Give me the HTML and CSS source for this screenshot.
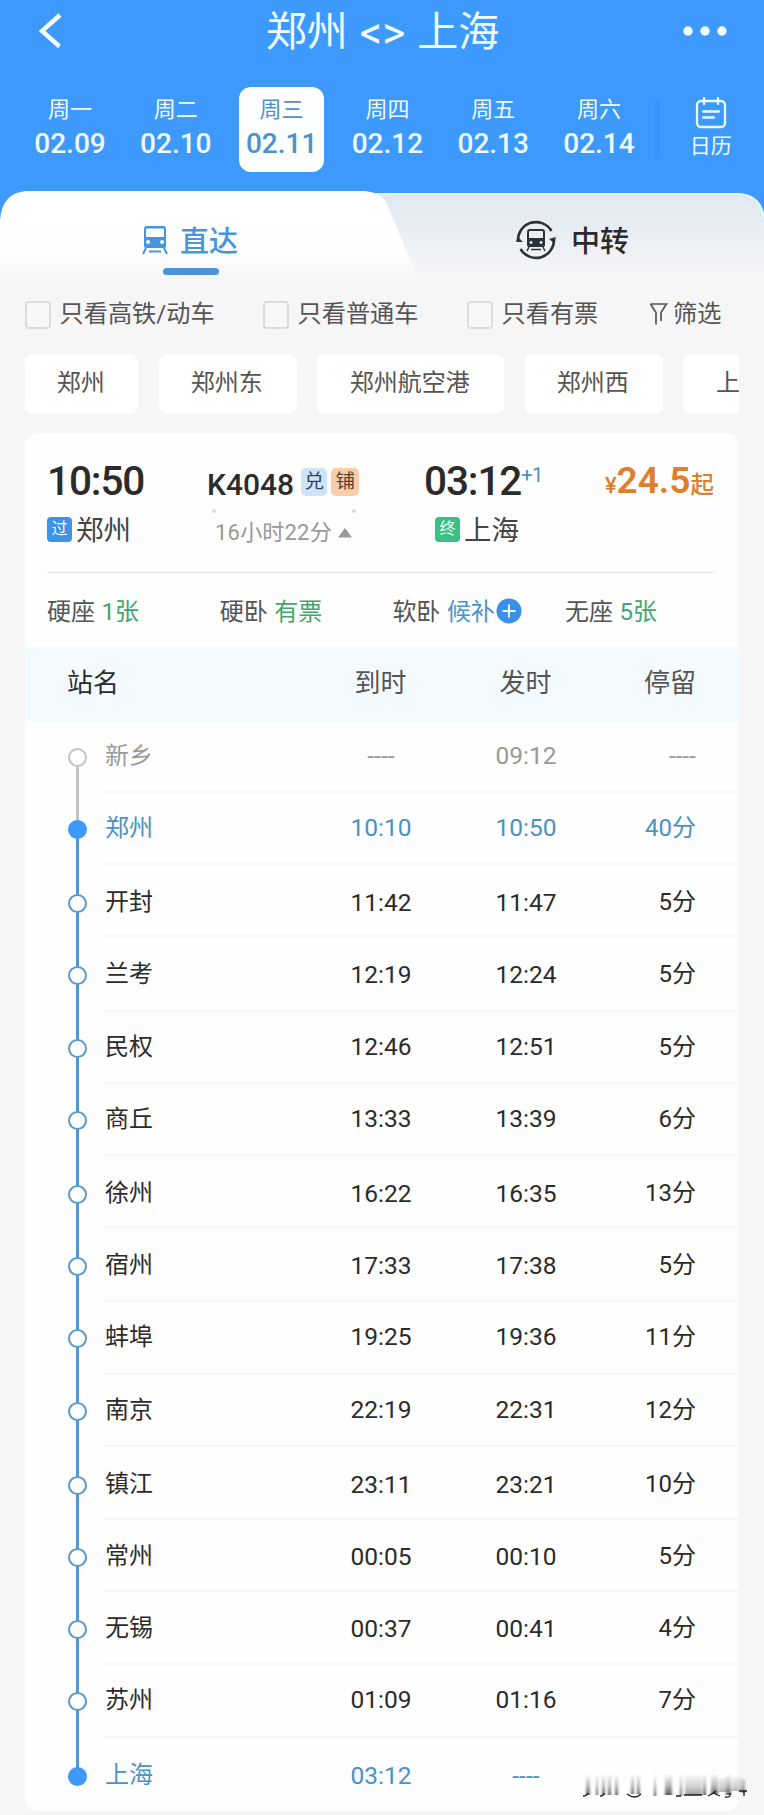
FILE: index.html
```html
<!DOCTYPE html>
<html lang="zh-CN">
<head>
<meta charset="utf-8">
<title>郑州 - 上海</title>
<link rel="stylesheet" href="styles.css">
</head>
<body>
<header class="top">
  <div class="titlebar">
    <svg class="back" width="24" height="36" viewBox="0 0 24 36"><path d="M21 2 3 18 20.500 33.500" fill="none" stroke="#f2fdff" stroke-width="4.500"/></svg>
    <h1 class="title"><span>郑州</span><span class="swap">&lt;&gt;</span><span>上海</span></h1>
    <svg class="more" width="46" height="12" viewBox="0 0 46 12" fill="#f2fdff"><circle cx="6" cy="6" r="4.700"/><circle cx="23" cy="6" r="4.700"/><circle cx="40" cy="6" r="4.700"/></svg>
  </div>
  <nav class="dates">
    <div class="date"><span>周一</span><b>02.09</b></div>
    <div class="date"><span>周二</span><b>02.10</b></div>
    <div class="date date--on"><span>周三</span><b>02.11</b></div>
    <div class="date"><span>周四</span><b>02.12</b></div>
    <div class="date"><span>周五</span><b>02.13</b></div>
    <div class="date"><span>周六</span><b>02.14</b></div>
    <i class="shade"></i>
    <div class="calendar">
      <svg width="32" height="32" viewBox="0 0 32 32" fill="none" stroke="#e9fbff" stroke-width="2.300"><rect x="2" y="4" width="28" height="26" rx="4"/><path d="M9 1v6M23 1v6M8 14.500h16M8 20.500h11" stroke-linecap="round"/></svg>
      <span>日历</span>
    </div>
  </nav>
</header>

<section class="tabs">
  <svg class="tabs-bg" width="764" height="90" viewBox="0 0 764 90">
    <defs>
      <linearGradient id="side" x1="0" y1="0" x2="0" y2="1"><stop offset="0" stop-color="#dfe8f2"/><stop offset="1" stop-color="#f6f6f6"/></linearGradient>
      <linearGradient id="front" x1="0" y1="0" x2="0" y2="1"><stop offset="0" stop-color="#fff"/><stop offset=".65" stop-color="#fefefe"/><stop offset="1" stop-color="#f6f6f6"/></linearGradient>
    </defs>
    <path d="M0 90V34L10 12H360V2H738Q764 4 764 30V90Z" fill="url(#side)"/>
    <path d="M360 3H738Q761 4 764 27" fill="none" stroke="#e2f7ff" stroke-width="2"/>
    <path d="M0 90V29Q2 2 26 0H364Q381 1 387 13L419 90Z" fill="url(#front)"/>
  </svg>
  <div class="tab tab--on">
    <svg width="28" height="30" viewBox="0 0 28 30"><path fill="#4794df" fill-rule="evenodd" d="M6 1h16q3 0 3 3v17q0 2-2 2H5q-2 0-2-2V4q0-3 3-3zm0 2.500q-1 0-1 1V12h18V4.500q0-1-1-1zm1 11.500a2 2 0 1 0 .1 0zm14 0a2 2 0 1 0 .1 0z"/><path d="M5 23 2 29M23 23l3 6M8 26.500h12" stroke="#4794df" stroke-width="2"/></svg>
    <span>直达</span>
  </div>
  <div class="tab">
    <svg width="42" height="42" viewBox="0 0 42 42"><g fill="none" stroke="#2d3238" stroke-width="2.600"><path d="M3 22A18 18 0 0 1 36.500 12M39 20A18 18 0 0 1 5.500 30"/></g><path fill="#2d3238" d="M1 23l2-5 5 5zM41 18l-2 6-5-4z"/><path fill="#2d3238" fill-rule="evenodd" d="M15 10h12q3 0 3 3v13q0 2-2 2H14q-2 0-2-2V13q0-3 3-3zm0 2q-1 0-1 1v6h14v-6q0-1-1-1zm1 10a1.500 1.500 0 1 0 .1 0zm10 0a1.500 1.500 0 1 0 .1 0z"/><path d="M14 28l-2 4M28 28l2 4M16 30.500h10" stroke="#2d3238" stroke-width="1.500"/></svg>
    <span>中转</span>
  </div>
</section>

<section class="filters">
  <label class="check check--a"><i></i>只看高铁/动车</label>
  <label class="check check--b"><i></i>只看普通车</label>
  <label class="check check--c"><i></i>只看有票</label>
  <div class="sift"><svg width="19" height="24" viewBox="0 0 19 24"><path d="M1.500 2h16L12 10.500V19M1.500 2 7 10.500V22.500" fill="none" stroke="#555" stroke-width="1.700"/></svg>筛选</div>
</section>

<section class="chips">
  <span class="chip chip--2">郑州</span>
  <span class="chip chip--3">郑州东</span>
  <span class="chip chip--5">郑州航空港</span>
  <span class="chip chip--3">郑州西</span>
  <span class="chip chip--3">上海</span>
</section>

<main class="card">
  <div class="train">
    <div class="from">
      <div class="clock">10:50</div>
      <div class="place"><i class="mark mark--pass">过</i>郑州</div>
    </div>
    <div class="mid">
      <div class="number">K4048<i class="tag tag--blue">兑</i><i class="tag tag--orange">铺</i></div>
      <div class="ends"><i></i><i></i></div>
      <div class="length">16小时22分<svg width="16" height="11" viewBox="0 0 16 11"><path d="M8 1 15 10.500H1z" fill="#999"/></svg></div>
    </div>
    <div class="to">
      <div class="clock">03:12<sup>+1</sup></div>
      <div class="place"><i class="mark mark--end">终</i>上海</div>
    </div>
    <div class="price"><small>¥</small><b>24.5</b><em>起</em></div>
  </div>
  <div class="seats">
    <div>硬座<b>1张</b></div>
    <div>硬卧<b>有票</b></div>
    <div>软卧<b class="wait">候补</b><svg width="26" height="26" viewBox="0 0 26 26"><circle cx="13" cy="13" r="12.500" fill="#3b8fe8"/><path d="M13 6.500v13M6.500 13h13" stroke="#e8fbff" stroke-width="2"/></svg></div>
    <div>无座<b>5张</b></div>
  </div>
  <div class="head"><span>站名</span><span>到时</span><span>发时</span><span>停留</span></div>
  <div class="stops">
    <div class="stop stop--before"><div class="rail"><i></i></div><div class="row"><span>新乡</span><span class="none">----</span><span>09:12</span><span class="none">----</span></div></div>
    <div class="stop stop--start"><div class="rail"><i></i></div><div class="row"><span>郑州</span><span>10:10</span><span>10:50</span><span>40分</span></div></div>
    <div class="stop low"><div class="rail"><i></i></div><div class="row"><span>开封</span><span>11:42</span><span>11:47</span><span>5分</span></div></div>
    <div class="stop low h75"><div class="rail"><i></i></div><div class="row"><span>兰考</span><span>12:19</span><span>12:24</span><span>5分</span></div></div>
    <div class="stop"><div class="rail"><i></i></div><div class="row"><span>民权</span><span>12:46</span><span>12:51</span><span>5分</span></div></div>
    <div class="stop"><div class="rail"><i></i></div><div class="row"><span>商丘</span><span>13:33</span><span>13:39</span><span>6分</span></div></div>
    <div class="stop low"><div class="rail"><i></i></div><div class="row"><span>徐州</span><span>16:22</span><span>16:35</span><span>13分</span></div></div>
    <div class="stop low h74"><div class="rail"><i></i></div><div class="row"><span>宿州</span><span>17:33</span><span>17:38</span><span>5分</span></div></div>
    <div class="stop h73"><div class="rail"><i></i></div><div class="row"><span>蚌埠</span><span>19:25</span><span>19:36</span><span>11分</span></div></div>
    <div class="stop"><div class="rail"><i></i></div><div class="row"><span>南京</span><span>22:19</span><span>22:31</span><span>12分</span></div></div>
    <div class="stop low h73"><div class="rail"><i></i></div><div class="row"><span>镇江</span><span>23:11</span><span>23:21</span><span>10分</span></div></div>
    <div class="stop mid-low"><div class="rail"><i></i></div><div class="row"><span>常州</span><span>00:05</span><span>00:10</span><span>5分</span></div></div>
    <div class="stop mid-low h73"><div class="rail"><i></i></div><div class="row"><span>无锡</span><span>00:37</span><span>00:41</span><span>4分</span></div></div>
    <div class="stop h73"><div class="rail"><i></i></div><div class="row"><span>苏州</span><span>01:09</span><span>01:16</span><span>7分</span></div></div>
    <div class="stop stop--last low h73"><div class="rail"><i></i></div><div class="row"><span>上海</span><span>03:12</span><span class="none">----</span><span></span></div></div>
  </div>
</main>

<svg class="smear" width="168" height="28" viewBox="0 0 168 28">
  <defs>
    <linearGradient id="fade" gradientUnits="userSpaceOnUse" x1="0" y1="2" x2="0" y2="24"><stop offset="0" stop-color="#333" stop-opacity="0"/><stop offset=".6" stop-color="#333" stop-opacity=".4"/><stop offset="1" stop-color="#222" stop-opacity=".8"/></linearGradient>
    <filter id="soft" x="-10%" y="-10%" width="120%" height="120%"><feGaussianBlur stdDeviation=".8 .1"/></filter>
  </defs>
  <g fill="url(#fade)" filter="url(#soft)">
    <path d="M4 2h4v21H4zM14 2h2v21h-2zM20 2h3v21h-3zM26 2h3v21h-3zM33 2h3v21h-3zM49 2h3v20h-3zM55 2h3v20h-3zM72 2h2v22h-2zM83 2h7v21h-7zM98 2h2v22h-2zM121 2h3v21h-3zM129 2h7v20h-7zM144 2h5v21h-5zM160 7h3v14h-3z"/>
    <path d="M103 2h17v21h-17zM137 6h7v14h-7zM150 5h10v14h-10z" opacity=".6"/>
  </g>
  <g fill="none" stroke="#1d1d1d" stroke-width="1.300">
    <path d="M1 24q4 0 5-3M18 24q4 0 4-3M45 22q8 6 14 0M94 24h5M102 23h18M126 24q5-2 8-5M131 21l7 3M143 25q6 1 5-4M157 19h8M162 19v5"/>
  </g>
</svg>
</body>
</html>
```
FILE: styles.css
```css
* { box-sizing: border-box; }
body {
  margin: 0;
  width: 764px;
  height: 1815px;
  overflow: hidden;
  position: relative;
  background: #f6f6f6;
  color: #2b2b2b;
  font-family: Roboto, "Noto Sans CJK SC", sans-serif;
  font-size: 24px;
}
i, em { font-style: normal; }
span, b { white-space: nowrap; }

/* header */
.top { height: 191px; background: #3d99fb; color: #effdff; }
.titlebar { height: 62px; padding: 0 36px 0 39px; display: flex; align-items: center; justify-content: space-between; }
.back { margin-right: 20px; }
.title { margin: 0; display: flex; align-items: center; gap: 12px; font-size: 41px; line-height: 60px; font-weight: 400; padding-top: 2px; }
.swap { font-size: 44px; padding-top: 2px; }
.dates { display: flex; align-items: flex-start; padding: 25px 0 0 17px; }
.date { width: 85px; height: 85px; margin-right: 20.8px; border-radius: 12px; padding-top: 8px; text-align: center; }
.date:first-child { margin-left: 10.500px; }
.date span { display: block; font-size: 22px; line-height: 30px; }
.date b { display: block; font-size: 28px; line-height: 36px; font-weight: 500; padding-top: 1px; }
.date--on { background: #fdffff; color: #4d92cf; }
.shade { width: 7px; height: 58px; margin: 13px 25.500px 0 -9px; background: linear-gradient(90deg, rgba(30,110,210,0), rgba(30,110,210,.18)); }
.calendar { margin-top: 10px; width: 50px; text-align: center; font-size: 21px; line-height: 28px; }
.calendar svg { display: block; margin: 0 auto 3px; }
.calendar span { display: block; }

/* tabs */
.tabs { position: relative; height: 90px; display: flex; background: linear-gradient(#3d99fb 40px, #f6f6f6 40px); }
.tabs-bg { position: absolute; left: 0; top: 0; }
.tab { position: relative; display: flex; align-items: center; height: 98px; font-size: 29px; font-weight: 500; padding-left: 124px; }
.tab span { padding-bottom: 2px; }
.tab svg { margin-right: 14px; }
.tab--on { width: 391px; color: #4794df; padding-left: 141px; }
.tab--on svg { margin-right: 11px; }
.tab--on::after { content: ""; position: absolute; left: 163px; top: 77px; width: 56px; height: 7px; border-radius: 4px; background: #4c94d9; }

/* filters and chips */
.filters { display: flex; align-items: center; height: 66px; padding-left: 25px; color: #555; white-space: nowrap; font-size: 24.200px; }
.check { display: flex; align-items: center; line-height: 34px; }
.check i { width: 26px; height: 28px; margin: 2px 8.5px 0 0; border: 2px solid #dcdcdc; border-radius: 4px; background: #f8f8f8; }
.check--a { width: 238px; }
.check--b { width: 204px; }
.check--c { width: 182px; }
.sift { display: flex; align-items: center; gap: 5px; line-height: 34px; }
.chips { display: flex; width: 714px; height: 60px; margin: 7px 0 0 25px; overflow: hidden; color: #555; }
.chip { flex: none; height: 60px; line-height: 58px; margin-right: 20.5px; border-radius: 8px; background: #fff; text-align: center; padding-right: 1.500px; }
.chip--2 { width: 113px; }
.chip--3 { width: 138px; }
.chip--5 { width: 187px; }
.chip:last-child { text-align: left; padding-left: 33px; }

/* train card */
.card { width: 714px; height: 1378px; margin: 19px 0 0 25px; border-radius: 12px; overflow: hidden; background: #fefefe; }
.train { display: flex; height: 140px; margin: 0 24px 0 22px; border-bottom: 1px solid #e2e2e2; padding-top: 24px; }
.from { width: 160px; }
.mid { width: 217px; }
.to { width: 179px; }
.clock { height: 48px; line-height: 48px; font-size: 40.5px; font-weight: 500; letter-spacing: -1.100px; white-space: nowrap; display: flex; }
.clock sup { font-size: 20px; line-height: 36px; font-weight: 400; letter-spacing: -.5px; color: #4a90c8; }
.place { display: flex; align-items: center; height: 38px; margin-top: 4px; font-size: 27.500px; color: #444; }
.mark { width: 25px; height: 25px; margin: 2px 4px 0 0; border-radius: 4px; color: #f2fff9; font-size: 16px; line-height: 24px; text-align: center; }
.mark--pass { background: #3f93e6; }
.mark--end { background: #3bbf85; }
.to .place { padding-left: 11px; }
.number { display: flex; align-items: center; height: 50px; font-size: 30px; font-weight: 500; padding-top: 4px; }
.tag { width: 26px; height: 28px; margin: 0 0 4px 7px; border-radius: 5px; font-size: 19.500px; line-height: 28px; font-weight: 400; text-align: center; }
.tag--blue { background: #cfe3f8; color: #345; }
.tag--orange { width: 28px; margin-left: 4px; background: #f8ceaa; color: #543; }
.ends { display: flex; justify-content: space-between; width: 149px; padding: 2px 0 0 5px; }
.ends i { width: 4px; height: 4px; border-radius: 50%; background: #d9dde2; }
.length { display: flex; align-items: center; gap: 5px; height: 33px; padding: 0 0 0 8px; font-size: 22px; color: #999; letter-spacing: .2px; }
.length svg { margin-top: 6px; }
.price { display: flex; align-items: baseline; height: 50px; line-height: 48px; color: #de7f2b; white-space: nowrap; margin-left: auto; padding-right: 1px; }
.price small { font-size: 22px; font-weight: 500; }
.price b { font-size: 37px; font-weight: 600; }
.price em { font-size: 23.500px; font-weight: 500; }
.seats { display: flex; height: 74px; padding-left: 22px; color: #555; }
.seats div { display: flex; align-items: center; width: 172.700px; white-space: nowrap; padding-bottom: 1px; }
.seats b { margin-left: 6.500px; font-weight: 400; color: #45a56c; }
.seats .wait { color: #4a94d0; }
.seats svg { margin: 2px 0 0 1px; }

/* timetable */
.head { display: flex; height: 74px; line-height: 72px; padding-left: 42px; background: #f3fbff; color: #555; font-size: 26px; }
.head span { width: 145px; text-align: center; }
.head span:first-child { width: 241px; text-align: left; color: #2b2b2b; }
.head span:last-child { width: 98px; text-align: right; }
.stop { display: flex; height: 72px; }
.h73 { height: 73px; }
.h74 { height: 74px; }
.h75 { height: 75px; }
.rail { width: 79px; padding: 26.500px 0 0 43px; background: linear-gradient(#5496cf, #5496cf) 51px 0 / 3px 100% no-repeat; }
.rail i { display: block; width: 19px; height: 19px; border: 2px solid #5a9bcb; border-radius: 50%; background: #fff; }
.mid-low .rail { padding-top: 27.500px; }
.low .rail { padding-top: 28.500px; }
.row { flex: 1; display: flex; line-height: 70px; border-bottom: 2px solid #f7f7f7; }
.row span { width: 145px; height: 60px; text-align: center; font-size: 24.500px; }
.row span:first-child { width: 204px; text-align: left; padding-left: 1px; font-size: 24px; }
.row span:nth-child(2), .row span:nth-child(3) { padding-left: 1px; }
.row span:last-child { width: 98px; text-align: right; font-size: 24px; }
.mid-low .row { line-height: 73px; }
.low .row { line-height: 75px; }
.row .none { letter-spacing: .1px; }
.stop--before { color: #999; }
.stop--before .rail { background: linear-gradient(#c4c4c4, #c4c4c4) 51px 36px / 3px 36px no-repeat; }
.stop--before i { border-color: #c4c4c4; }
.stop--start, .stop--last { color: #4a92c6; }
.stop--start .rail { background: linear-gradient(#c4c4c4 36px, #5496cf 36px) 51px 0 / 3px 100% no-repeat; }
.stop--start i, .stop--last i { background: #3d99fb; border-color: #3d99fb; }
.stop--last .rail { background-size: 3px 37px; }
.stop--last .row { border-bottom: 0; }
.smear { position: absolute; left: 582px; top: 1772px; }
```
